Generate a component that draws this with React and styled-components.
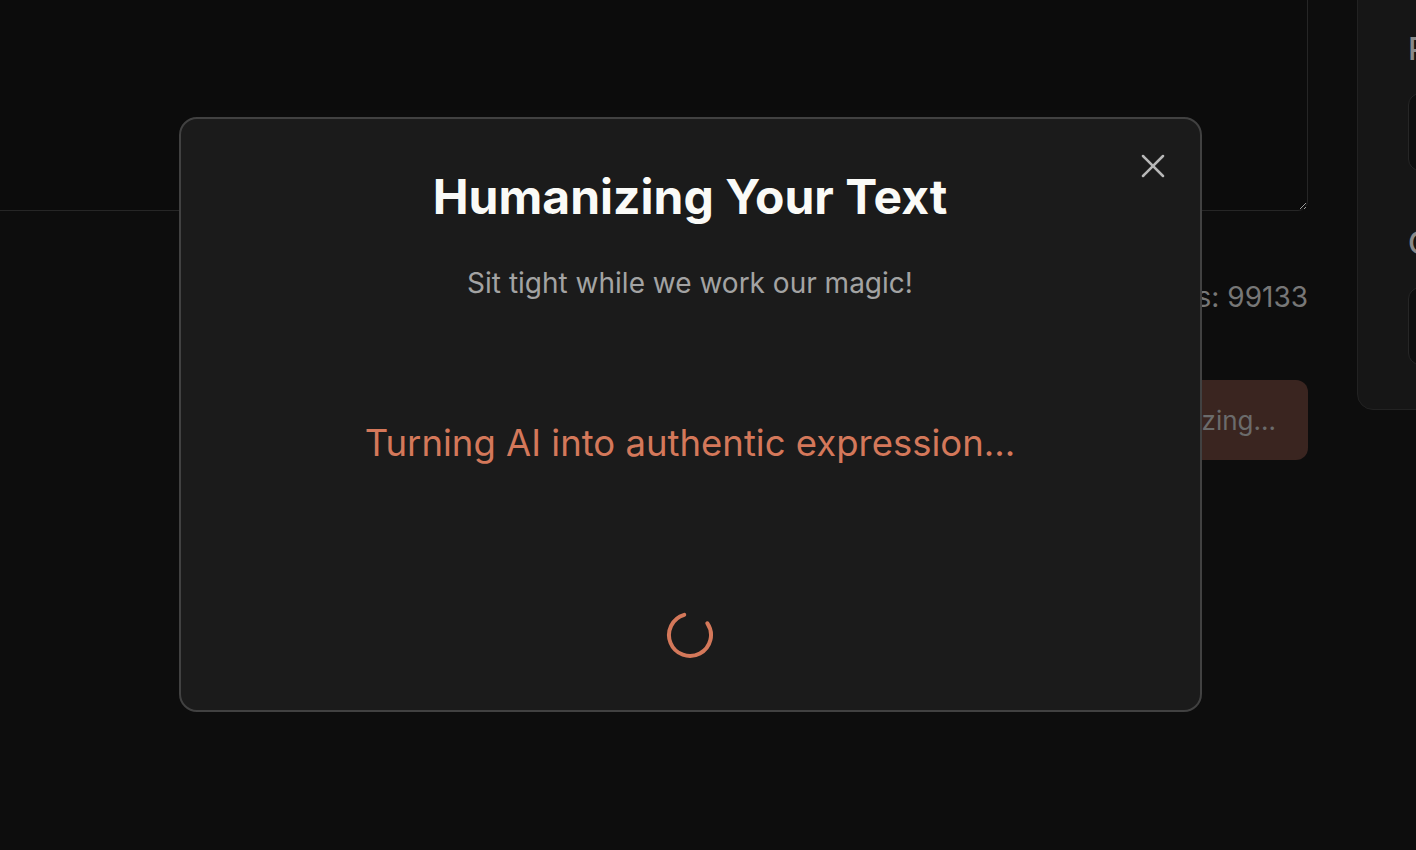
import React from 'react'
import styled, { createGlobalStyle } from 'styled-components'
import { X } from 'lucide-react'

const GlobalStyle = createGlobalStyle`
  html, body {
    margin: 0;
    padding: 0;
    background: #0d0d0d;
    overflow: hidden;
    font-family: Inter, "Noto Sans", sans-serif;
  }
`

const Spinner = () => (
  <SpinnerSvg width="50" height="50" viewBox="0 0 50 50">
    <path
      d="M 42.4 13.26 A 21 21 0 1 1 19.2 4.82"
      fill="none"
      stroke="#d4785a"
      strokeWidth="4"
      strokeLinecap="round"
    />
  </SpinnerSvg>
)

const App = () => {
  return (
    <>
      <GlobalStyle />
      <Page>
        <Main>
          <TextArea readOnly defaultValue="" />
          <Counter>Characters: 99133</Counter>
          <ActionRow>
            <HumanizeButton disabled>Humanizing...</HumanizeButton>
          </ActionRow>
        </Main>
        <SidePanel>
          <Field>
            <Label>Purpose</Label>
            <Select />
          </Field>
          <Field>
            <Label>Choose tone</Label>
            <Select />
          </Field>
        </SidePanel>
      </Page>

      <Overlay>
        <Modal>
          <CloseButton aria-label="Close">
            <X size={40} strokeWidth={1.5} />
          </CloseButton>
          <Title>Humanizing Your Text</Title>
          <Subtitle>Sit tight while we work our magic!</Subtitle>
          <Status>Turning AI into authentic expression...</Status>
          <SpinnerWrap>
            <Spinner />
          </SpinnerWrap>
        </Modal>
      </Overlay>
    </>
  )
}

export default App

const Page = styled.div`
  display: flex;
  align-items: flex-start;
  gap: 49px;
  margin: -40px 0 0 -40px;
  width: 1800px;
`

const Main = styled.div`
  width: 1348px;
  display: flex;
  flex-direction: column;
`

const TextArea = styled.textarea`
  box-sizing: border-box;
  height: 251px;
  width: 100%;
  background: #0c0c0c;
  border: 1px solid #262626;
  border-radius: 0 0 10px 0;
  resize: vertical;
  outline: none;
`

const Counter = styled.div`
  text-align: right;
  margin-top: 70px;
  font-size: 28px;
  line-height: 32px;
  color: #777;
`

const ActionRow = styled.div`
  display: flex;
  justify-content: flex-end;
  margin-top: 67px;
`

const HumanizeButton = styled.button`
  height: 80px;
  padding: 0 32px;
  border: none;
  border-radius: 12px;
  background: #3a2520;
  color: #6b6b6b;
  font-family: Inter, sans-serif;
  font-size: 26px;
`

const SidePanel = styled.div`
  box-sizing: border-box;
  width: 400px;
  height: 450px;
  padding: 72px 0 0 50px;
  background: #161616;
  border: 1px solid #222;
  border-radius: 0 0 0 16px;
  display: flex;
  flex-direction: column;
  gap: 56px;
`

const Field = styled.div`
  display: flex;
  flex-direction: column;
  gap: 28px;
`

const Label = styled.div`
  font-size: 31px;
  line-height: 32px;
  font-weight: 500;
  color: #8a8a8a;
`

const Select = styled.div`
  height: 76px;
  border: 1px solid #262626;
  border-radius: 12px;
  background: #0f0f0f;
`

const Overlay = styled.div`
  position: fixed;
  inset: 0;
  display: flex;
  align-items: center;
  justify-content: center;
  padding: 0 36px 22px 0;
`

const Modal = styled.div`
  position: relative;
  box-sizing: border-box;
  width: 1023px;
  height: 595px;
  background: #1b1b1b;
  border: 2px solid #414141;
  border-radius: 18px;
  display: flex;
  flex-direction: column;
  align-items: center;
  padding-top: 50px;
`

const CloseButton = styled.button`
  position: absolute;
  top: 27px;
  right: 27px;
  padding: 0;
  background: transparent;
  border: none;
  color: #b8b8b8;
  display: flex;
  cursor: pointer;
`

const Title = styled.h2`
  margin: 0;
  font-size: 48px;
  line-height: 56px;
  font-weight: 700;
  color: #fafaf7;
`

const Subtitle = styled.p`
  margin: 40px 0 0;
  font-size: 28px;
  line-height: 36px;
  color: #a3a3a3;
`

const Status = styled.p`
  margin: 120px 0 0;
  font-size: 36.5px;
  line-height: 44px;
  color: #d4785a;
`

const SpinnerWrap = styled.div`
  margin-top: 145px;
  display: flex;
`

const SpinnerSvg = styled.svg`
  display: block;
`
